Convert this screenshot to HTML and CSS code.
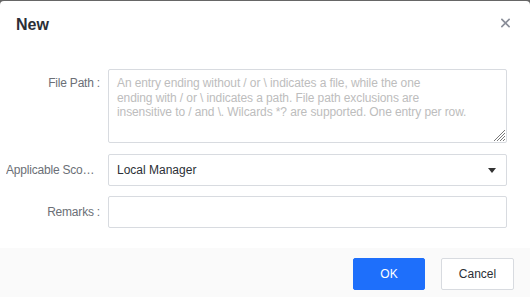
FILE: index.html
```html
<!DOCTYPE html>
<html>
<head>
<meta charset="utf-8">
<link rel="stylesheet" href="styles.css">
</head>
<body>
<div class="dialog">
  <div class="header">
    <div class="title">New</div>
    <button class="close" aria-label="Close">
      <svg width="10" height="10" viewBox="0 0 10 10"><path d="M1 1L9 9M9 1L1 9" stroke="#8a8e99" stroke-width="1.8" stroke-linecap="square"/></svg>
    </button>
  </div>
  <div class="form">
    <div class="row">
      <label class="label">File Path :</label>
      <div class="field area-wrap">
        <textarea class="area" placeholder="An entry ending without / or \ indicates a file, while the one&#10;ending with / or \ indicates a path. File path exclusions are&#10;insensitive to / and \. Wilcards *? are supported. One entry per row."></textarea>
        <svg class="grip" width="12" height="12" viewBox="0 0 12 12"><path d="M12 1L1 12M12 4L4 12M12 7L7 12M12 10L10 12" stroke="#7a7a7a" stroke-width="1"/></svg>
      </div>
    </div>
    <div class="row">
      <label class="label">Applicable Scope :</label>
      <div class="field select">
        <span>Local Manager</span>
        <svg width="8" height="5" viewBox="0 0 8 5"><path d="M0 0H8L4 5Z" fill="#333"/></svg>
      </div>
    </div>
    <div class="row">
      <label class="label">Remarks :</label>
      <div class="field input"></div>
    </div>
  </div>
  <div class="footer">
    <button class="btn primary">OK</button>
    <button class="btn">Cancel</button>
  </div>
</div>
</body>
</html>
```
FILE: styles.css
```css
html, body {
  margin: 0;
  padding: 0;
  height: 100%;
}
body {
  background: #666;
  font-family: "Liberation Sans", Arial, sans-serif;
  overflow: hidden;
}
.dialog {
  margin-top: 1px;
  height: 300px;
  background: #fff;
  border-radius: 4px;
  display: flex;
  flex-direction: column;
}
.header {
  display: flex;
  justify-content: space-between;
  align-items: flex-start;
  padding: 14px 20px 0 16px;
  height: 40px;
  box-sizing: border-box;
}
.title {
  font-size: 16px;
  font-weight: bold;
  color: #2b2f36;
  line-height: 20px;
}
.close {
  border: none;
  background: none;
  padding: 0;
  margin-top: 3px;
  width: 9px;
  height: 10px;
  display: flex;
}
.form {
  padding: 28px 23px 0 6px;
  display: flex;
  flex-direction: column;
  gap: 11px;
}
.row {
  display: flex;
  gap: 8px;
  align-items: flex-start;
}
.row + .row + .row {
  margin-top: -1px;
}
.label {
  width: 94px;
  flex: none;
  text-align: right;
  font-size: 12px;
  letter-spacing: -0.2px;
  color: #6b6f76;
  line-height: 32px;
  white-space: nowrap;
  overflow: hidden;
  text-overflow: ellipsis;
}
.row:first-child .label {
  line-height: 28px;
}
.field {
  flex: 1;
  border: 1px solid #d8dbe0;
  border-radius: 2px;
  box-sizing: border-box;
  height: 32px;
}
.area-wrap {
  position: relative;
  height: 74px;
  border: none;
}
.area {
  display: block;
  width: 100%;
  height: 74px;
  box-sizing: border-box;
  border: 1px solid #d8dbe0;
  border-radius: 2px;
  padding: 6px 8px;
  resize: none;
  font-family: "Liberation Sans", Arial, sans-serif;
  font-size: 12px;
  line-height: 14.5px;
  letter-spacing: -0.1px;
  outline: none;
  overflow: hidden;
}
.area::placeholder {
  color: #bdbdbd;
}
.grip {
  position: absolute;
  right: 2px;
  bottom: 2px;
}
.select {
  display: flex;
  align-items: center;
  justify-content: space-between;
  padding: 0 10px 0 8px;
  font-size: 12px;
  color: #2b2f36;
}
.footer {
  margin-top: 20px;
  background: #fafafa;
  flex: 1;
  display: flex;
  justify-content: flex-end;
  align-items: flex-start;
  gap: 16px;
  padding: 10px 16px 0 0;
}
.btn {
  height: 32px;
  width: 73px;
  border: 1px solid #d8dbe0;
  border-radius: 2px;
  background: #fff;
  font-family: "Liberation Sans", Arial, sans-serif;
  font-size: 12px;
  color: #2b2f36;
  padding: 0;
}
.btn.primary {
  width: 72px;
  background: #1e6ffb;
  border-color: #1e6ffb;
  color: #fff;
}
```
